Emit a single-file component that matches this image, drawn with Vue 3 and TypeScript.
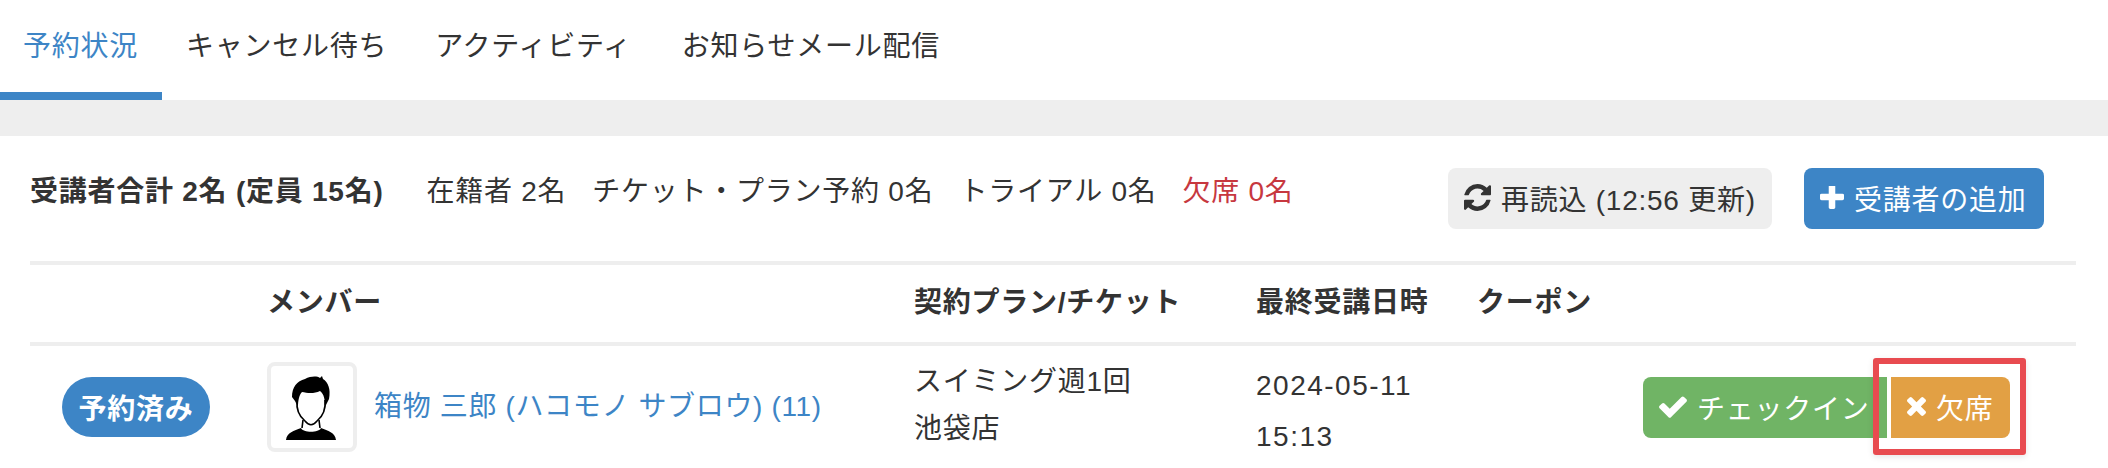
<template>
  <div class="page">
    <nav class="tabs">
      <a v-for="(tab, i) in tabs" :key="tab" class="tab" :class="{ active: i === 0 }">{{ tab }}</a>
    </nav>
    <div class="divider"></div>

    <section class="content">
      <div class="summary">
        <div class="counts">
          <strong class="total">受講者合計 2名 (定員 15名)</strong>
          <span class="count">在籍者 2名</span>
          <span class="count">チケット・プラン予約 0名</span>
          <span class="count">トライアル 0名</span>
          <span class="count absent">欠席 0名</span>
        </div>
        <div class="tools">
          <button class="btn btn-light">
            <svg class="icon-refresh" viewBox="128 128 1536 1536"><path :d="icons.refresh" /></svg>
            再読込 (12:56 更新)
          </button>
          <button class="btn btn-blue">
            <svg class="icon-plus" viewBox="192 192 1408 1408"><path :d="icons.plus" /></svg>
            受講者の追加
          </button>
        </div>
      </div>

      <div class="table">
        <div class="row head">
          <div></div>
          <div>メンバー</div>
          <div>契約プラン/チケット</div>
          <div>最終受講日時</div>
          <div>クーポン</div>
          <div></div>
        </div>
        <div class="row body">
          <div class="status"><span class="pill">予約済み</span></div>
          <div class="member">
            <div class="avatar">
              <svg viewBox="0 0 82 82" width="82" height="82">
                <path d="M15 74c1-8 8-9 15-12 2 5 18 5 20 0 7 3 14 4 15 12z" fill="#000" />
                <g transform="translate(-1 -2)">
                  <path d="M27 36c-1 11 3 17 8 21 4 5 8 5 12 0 5-4 9-10 8-21" fill="none" stroke="#000" stroke-width="1.6" />
                  <path d="M33 56l-1 8M49 56l1 8" stroke="#000" stroke-width="1.6" />
                  <path d="M22 33c0-10 5-16 13-18 6-3 12-3 15-1l2-2 1 3c5 3 8 10 6 20l-4 8c0-8-1-13-5-16-6 3-13 2-18 1-3 3-4 9-4 15l-3-6z" fill="#000" />
                </g>
              </svg>
            </div>
            <a class="name">箱物 三郎 (ハコモノ サブロウ) (11)</a>
          </div>
          <div class="plan">スイミング週1回<br />池袋店</div>
          <div class="date">2024-05-11<br />15:13</div>
          <div></div>
          <div class="actions">
            <button class="btn btn-green">
              <svg class="icon-check" viewBox="121 256 1550 1280"><path :d="icons.check" /></svg>
              チェックイン
            </button>
            <button class="btn btn-orange">
              <svg class="icon-times" viewBox="110 366 1188 1188"><path :d="icons.times" /></svg>
              欠席
            </button>
            <div class="highlight"></div>
          </div>
        </div>
      </div>
    </section>
  </div>
</template>

<script setup lang="ts">
const tabs: string[] = ['予約状況', 'キャンセル待ち', 'アクティビティ', 'お知らせメール配信']

const icons = {
  refresh:
    'M1639 1056q0 5-1 7-64 268-268 434.5t-478 166.500q-146 0-282.500-55t-243.500-157l-129 129q-19 19-45 19t-45-19-19-45v-448q0-26 19-45t45-19h448q26 0 45 19t19 45-19 45l-137 137q71 66 161 102t187 36q134 0 250-65t186-179q11-17 53-117 8-23 30-23h192q13 0 22.500 9.500t9.500 22.500zm25-800v448q0 26-19 45t-45 19h-448q-26 0-45-19t-19-45 19-45l138-138q-148-137-349-137-134 0-250 65t-186 179q-11 17-53 117-8 23-30 23h-199q-13 0-22.500-9.500t-9.500-22.500v-7q65-268 270-434.500t480-166.500q146 0 284 55.500t245 156.500l130-129q19-19 45-19t45 19 19 45z',
  plus:
    'M1600 736v192q0 40-28 68t-68 28h-416v416q0 40-28 68t-68 28h-192q-40 0-68-28t-28-68v-416h-416q-40 0-68-28t-28-68v-192q0-40 28-68t68-28h416v-416q0-40 28-68t68-28h192q40 0 68 28t28 68v416h416q40 0 68 28t28 68z',
  check:
    'M1671 566q0 40-28 68l-724 724-136 136q-28 28-68 28t-68-28l-136-136-362-362q-28-28-28-68t28-68l136-136q28-28 68-28t68 28l294 295 656-657q28-28 68-28t68 28l136 136q28 28 28 68z',
  times:
    'M1298 1322q0 40-28 68l-136 136q-28 28-68 28t-68-28l-294-294-294 294q-28 28-68 28t-68-28l-136-136q-28-28-28-68t28-68l294-294-294-294q-28-28-28-68t28-68l136-136q28-28 68-28t68 28l294 294 294-294q28-28 68-28t68 28l136 136q28 28 28 68t-28 68l-294 294 294 294q28 28 28 68z',
}
</script>

<style>
html,
body {
  margin: 0;
  background: #fff;
  overflow: hidden;
}
</style>

<style scoped>
.page {
  width: 2108px;
  height: 468px;
  overflow: hidden;
  font-family: "Liberation Sans", "Noto Sans CJK JP", sans-serif;
  font-size: 28px;
  letter-spacing: 0.75px;
  color: #333;
}

.tabs {
  display: flex;
  height: 100px;
}

.tab {
  display: flex;
  align-items: center;
  padding: 0 24px 4px;
  border-bottom: 8px solid transparent;
  box-sizing: border-box;
  height: 100px;
}

.tab:first-child {
  width: 162px;
  padding-left: 23px;
  padding-right: 0;
}

.tab:nth-child(3) {
  margin-right: 2px;
}

.tab.active {
  color: #3d85c6;
  border-bottom-color: #3d85c6;
}

.divider {
  height: 36px;
  background: #eee;
}

.content {
  padding: 32px 32px 0 30px;
}

.summary {
  display: flex;
  justify-content: space-between;
  align-items: flex-start;
  height: 93px;
  border-bottom: 4px solid #eee;
}

.counts {
  display: flex;
  align-items: center;
  height: 42px;
}

.total {
  font-weight: 700;
  margin-right: 43px;
}

.count {
  margin-right: 26px;
}

.absent {
  color: #c7383f;
}

.tools {
  display: flex;
  gap: 32px;
  margin-right: 32px;
}

.btn {
  display: inline-flex;
  align-items: center;
  gap: 10px;
  height: 61px;
  border: 0;
  border-radius: 8px;
  padding: 0 16px 2px;
  font: inherit;
  letter-spacing: inherit;
  white-space: nowrap;
  color: #fff;
}

.btn svg {
  fill: currentColor;
  flex: none;
}

.icon-refresh {
  width: 27px;
  height: 27px;
}

.icon-plus {
  width: 24px;
  height: 24px;
}

.icon-check {
  width: 28px;
  height: 23px;
}

.icon-times {
  width: 19px;
  height: 19px;
}

.btn-light {
  background: #eee;
  color: #333;
  width: 324px;
}

.btn-blue {
  background: #3d85c6;
  width: 240px;
}

.row {
  display: grid;
}

.head {
  grid-template-columns: 237px 647px 342px 221px 1fr 0;
  align-items: center;
  height: 81px;
  font-weight: 700;
  border-bottom: 4px solid #eee;
  box-sizing: border-box;
  padding-bottom: 8px;
}

.body {
  grid-template-columns: 237px 647px 342px 221px 0 1fr;
  padding-top: 12px;
}

.status {
  padding: 19px 0 0 32px;
}

.pill {
  display: inline-flex;
  align-items: center;
  justify-content: center;
  width: 148px;
  height: 60px;
  border-radius: 30px;
  background: #3d85c6;
  color: #fff;
  font-weight: 700;
}

.member {
  display: flex;
  align-items: flex-start;
  gap: 17px;
  padding-top: 4px;
}

.avatar {
  width: 90px;
  height: 90px;
  flex: none;
  box-sizing: border-box;
  border: 4px solid #eee;
  border-radius: 8px;
}

.avatar svg {
  display: block;
}

.name {
  color: #3d85c6;
  line-height: 90px;
  letter-spacing: 0.65px;
}

.plan {
  line-height: 47px;
}

.date {
  line-height: 51px;
  padding-top: 2px;
  letter-spacing: 1.5px;
}

.actions {
  position: relative;
  display: flex;
  justify-content: flex-end;
  gap: 4px;
  padding: 19px 66px 0 0;
  align-items: flex-start;
}

.btn-green {
  background: #70b465;
  width: 244px;
  border-radius: 8px 0 0 8px;
}

.btn-orange {
  background: #e2a044;
  width: 119px;
  border-radius: 0 8px 8px 0;
}

.highlight {
  position: absolute;
  top: 0;
  right: 50px;
  width: 153px;
  height: 97px;
  box-sizing: border-box;
  border: 6px solid #e84b50;
  border-radius: 3px;
  box-shadow: 0 2px 6px rgba(0, 0, 0, 0.1);
}
</style>
